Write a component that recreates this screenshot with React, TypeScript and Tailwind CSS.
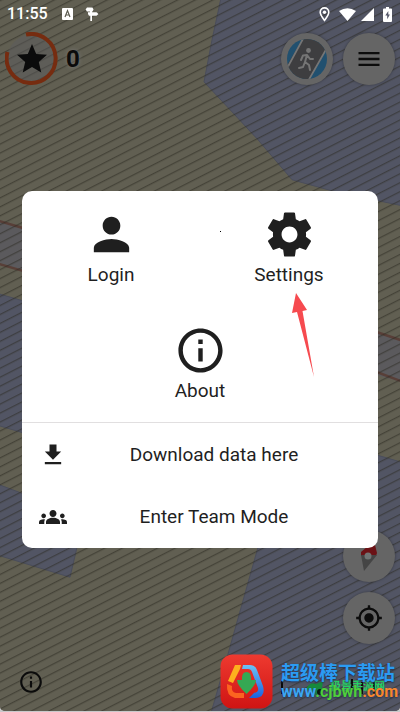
import type { ReactNode } from "react"
import { MdDownload, MdGroups, MdInfoOutline, MdMenu, MdMyLocation, MdPerson, MdStar } from "react-icons/md"

function MapBackground() {
  return (
    <svg
      className="absolute inset-0 h-full w-full"
      viewBox="0 0 400 712"
      preserveAspectRatio="none"
      aria-hidden="true"
    >
      <defs>
        <pattern id="hatch" width="20" height="8" patternUnits="userSpaceOnUse" patternTransform="rotate(-27)">
          <rect y="0" width="20" height="1.3" fill="#292820" fillOpacity="0.5" />
        </pattern>
      </defs>
      <rect width="400" height="712" fill="#615f52" />
      <g fill="#525564" stroke="#4a4d5a" strokeWidth="1">
        <path d="M221 -2 L212 40 L204 82 L232 112 L258 140 L292 180 L335 192 L402 206 V-2Z" />
        <path d="M-2 294 L22 301 L200 350 L180 480 L-2 426Z" />
        <path d="M-2 485 L22 494 L80 515 L77 548 L70 578 L-2 556Z" />
        <path d="M402 463 L378 456 L280 440 L258 548 L228 655 L211 714 H402Z" />
      </g>
      <path d="M-2 220 L402 341 V383 L-2 263Z" fill="#5b5a5d" />
      <path
        d="M-2 221 L22 228 L378 333 L402 341 M-2 264 L22 271 L378 373 L402 382"
        fill="none"
        stroke="#583f38"
        strokeWidth="2.5"
      />
      <rect width="400" height="712" fill="url(#hatch)" />
    </svg>
  )
}

function StatusBar() {
  return (
    <div className="flex h-7 items-center pl-[7px] pr-2 text-white">
      <span className="font-['Roboto',sans-serif] text-base font-medium">11:55</span>
      <svg className="ml-[14px] h-3 w-[11px]" viewBox="0 0 11 12">
        <rect width="11" height="12" rx="1" fill="#fff" />
        <path d="M3 9 L5.5 2.6 L8 9 M4 7 H7" fill="none" stroke="#5c5b4f" strokeWidth="1.2" />
      </svg>
      <svg className="ml-3 h-[15px] w-[14px]" viewBox="0 0 14 15" fill="#fff">
        <path d="M2 .5h5.5l1 2-1 2H7v.8h4.5l2 1.7-2 1.8H7V14H5.3V8.8H4L3 7V5.3h2v-.8H2L.6 2.5z" />
      </svg>
      <div className="ml-auto flex items-center gap-[5px]">
        <svg className="mr-1 h-[15px] w-[11px]" viewBox="0 0 11 15">
          <path
            d="M5.5 13.4 C3 10 1.2 7.6 1.2 5.2 a4.3 4.3 0 0 1 8.6 0 C9.8 7.6 8 10 5.5 13.4Z"
            fill="none"
            stroke="#fff"
            strokeWidth="1.6"
          />
          <circle cx="5.5" cy="5.2" r="1.7" fill="#fff" />
        </svg>
        <svg className="h-[13px] w-[17px]" viewBox="0 0 17 13">
          <path d="M0 3 Q8.5 -2.5 17 3 L8.5 13Z" fill="#fff" />
        </svg>
        <svg className="h-[13px] w-[13px]" viewBox="0 0 13 13">
          <path d="M13 0 V13 H0Z" fill="#fff" />
        </svg>
        <svg className="ml-1 h-[15px] w-[9px]" viewBox="0 0 9 15">
          <path d="M3 0h3v1.5h2q1 0 1 1V14q0 1-1 1H1q-1 0-1-1V2.5q0-1 1-1h2z" fill="#fff" />
          <path d="M5.3 4 L2.3 8.6 H4.2 V12.2 L6.9 7.6 H5.3Z" fill="#55586a" />
        </svg>
      </div>
    </div>
  )
}

interface RoundButtonProps {
  label: string
  children: ReactNode
}

function RoundButton({ label, children }: RoundButtonProps) {
  return (
    <button
      type="button"
      aria-label={label}
      className="flex h-[52px] w-[52px] items-center justify-center rounded-full bg-[#656565] text-[#0c0c0c] shadow-[0_0_3px_rgba(0,0,0,0.35)]"
    >
      {children}
    </button>
  )
}

function OverlayIcon() {
  return (
    <svg className="h-10 w-10" viewBox="0 0 40 40">
      <defs>
        <clipPath id="overlay-clip">
          <circle cx="20" cy="20" r="20" />
        </clipPath>
      </defs>
      <g clipPath="url(#overlay-clip)">
        <rect width="40" height="40" fill="#21506f" />
        <path d="M17 -2 H41 L38 12 L20 44 H-4 V33Z" fill="#3e3e40" />
        <path d="M17 -2 L-2 33 M41 7 L20 44" stroke="#757575" strokeWidth="1.8" />
      </g>
      <circle cx="21.5" cy="11.5" r="2.4" fill="#757575" />
      <path
        d="M20 16 L18 23 L22 26 L23 31 M18 23 L16 28 L12 29 M14 21 L16 16.5 L20 16 L23 20 L26 20"
        fill="none"
        stroke="#757575"
        strokeWidth="2"
        strokeLinecap="round"
        strokeLinejoin="round"
      />
    </svg>
  )
}

function CompassIcon() {
  return (
    <svg className="h-9 w-9" viewBox="0 0 36 36">
      <path d="M23 3 L10 14 L10 18 L25 18 L26 15Z" fill="#6b1216" />
      <path d="M10 17 L26 17 L13 33Z" fill="#454545" />
      <circle cx="17" cy="18" r="3.5" fill="#707474" />
    </svg>
  )
}

function GearIcon() {
  return (
    <svg className="h-[53px] w-[53px]" viewBox="0 0 24 24" fill="currentColor">
      <path d="M19.43 12.98c.04-.32.07-.64.07-.98s-.03-.66-.07-.98l2.11-1.65c.19-.15.24-.42.12-.64l-2-3.46c-.12-.22-.39-.3-.61-.22l-2.49 1c-.52-.4-1.08-.73-1.69-.98l-.38-2.65C14.46 2.18 14.25 2 14 2h-4c-.25 0-.46.18-.49.42l-.38 2.65c-.61.25-1.17.59-1.69.98l-2.49-1c-.23-.09-.49 0-.61.22l-2 3.46c-.13.22-.07.49.12.64l2.11 1.65c-.04.32-.07.65-.07.98s.03.66.07.98l-2.11 1.65c-.19.15-.24.42-.12.64l2 3.46c.12.22.39.3.61.22l2.49-1c.52.4 1.08.73 1.69.98l.38 2.65c.03.24.24.42.49.42h4c.25 0 .46-.18.49-.42l.38-2.65c.61-.25 1.17-.59 1.69-.98l2.49 1c.23.09.49 0 .61-.22l2-3.46c.12-.22.07-.49-.12-.64l-2.11-1.65zM12 15.6c-1.99 0-3.6-1.61-3.6-3.6s1.61-3.6 3.6-3.6 3.6 1.61 3.6 3.6-1.61 3.6-3.6 3.6z" />
    </svg>
  )
}

function MapHeader() {
  return (
    <header className="flex items-center justify-between px-[5px] pt-1">
      <button type="button" aria-label="Solved quests" className="flex items-center gap-2 text-[#0b0b0b]">
        <span className="relative flex h-[53px] w-[53px] items-center justify-center">
          <svg className="absolute inset-0 h-full w-full" viewBox="0 0 53 53">
            <circle cx="26.5" cy="26.5" r="24" fill="#5c5c60" fillOpacity="0.45" />
            <path d="M21 2.5 A24.5 24.5 0 1 1 2.5 20" fill="none" stroke="#762c10" strokeWidth="4" />
          </svg>
          <MdStar className="relative h-9 w-9" />
        </span>
        <span className="font-['Roboto',sans-serif] text-2xl font-bold [text-shadow:0_0_4px_#777]">0</span>
      </button>
      <div className="flex gap-[10px]">
        <RoundButton label="Overlays">
          <OverlayIcon />
        </RoundButton>
        <RoundButton label="Menu">
          <MdMenu className="h-7 w-7" />
        </RoundButton>
      </div>
    </header>
  )
}

interface MenuItemProps {
  icon: ReactNode
  label: string
}

function MenuTile({ icon, label }: MenuItemProps) {
  return (
    <button type="button" className="flex h-[116px] w-1/2 flex-col items-center pt-[17px]">
      {icon}
      <span className="mt-[2px] text-[19px] leading-6">{label}</span>
    </button>
  )
}

function MenuRow({ icon, label }: MenuItemProps) {
  return (
    <button type="button" className="flex h-[62px] w-full items-center px-[17px]">
      {icon}
      <span className="flex-1 text-center text-[19px] leading-6">{label}</span>
    </button>
  )
}

function MainMenu() {
  return (
    <section
      role="dialog"
      aria-label="Main menu"
      className="relative mx-[22px] rounded-[10px] bg-white font-['Roboto',sans-serif] text-[#1f1f1f]"
    >
      <div className="flex flex-wrap justify-center">
        <MenuTile icon={<MdPerson className="h-[53px] w-[53px]" />} label="Login" />
        <MenuTile icon={<GearIcon />} label="Settings" />
        <MenuTile icon={<MdInfoOutline className="h-[53px] w-[53px]" />} label="About" />
      </div>
      <hr className="-mt-px border-[#e1dfe0]" />
      <div className="pt-px">
        <MenuRow icon={<MdDownload className="h-7 w-7" />} label="Download data here" />
        <MenuRow icon={<MdGroups className="h-7 w-7" />} label="Enter Team Mode" />
      </div>
      <svg className="absolute right-[62px] top-[102px] h-[84px] w-6" viewBox="0 0 24 84" aria-hidden="true">
        <path d="M4 0 L15 17 L10.5 18 L22 84 L5 19 L0 20Z" fill="#f64a4f" />
      </svg>
      <span className="absolute left-[198px] top-10 h-px w-px bg-black" />
    </section>
  )
}

function SiteBadge() {
  return (
    <a href="#site" className="relative flex items-center gap-2 no-underline">
      <svg className="h-[55px] w-[53px]" viewBox="0 0 53 55" aria-hidden="true">
        <defs>
          <linearGradient id="badge-red" x2="0" y2="1">
            <stop offset="0" stopColor="#ee3a30" />
            <stop offset="1" stopColor="#cf1413" />
          </linearGradient>
          <linearGradient id="badge-blue" x2="0" y2="1">
            <stop offset="0" stopColor="#6cc2f4" />
            <stop offset="1" stopColor="#1b62e0" />
          </linearGradient>
        </defs>
        <rect x="0.5" y="0.5" width="52" height="54" rx="12" fill="url(#badge-red)" />
        <path d="M15 11 H21 L20 15 L13 29 L8 27Z" fill="#fdb01e" />
        <path d="M7 30 L12 32 Q11 38 16 39 H24 V44 H15 Q6 42 7 30Z" fill="#fb6420" />
        <path
          d="M23 11 H30 Q35 11 37 16 L43 32 Q46 43 36 44 H29 L34 39 Q39 38 38 34 L32 18 Q31 15 28 15 H22Z"
          fill="url(#badge-blue)"
        />
        <path d="M22 24 Q22 18 26.5 18 Q31 18 31 24 V26 H36 Q36 31 26.5 40 Q17 31 17 26 H22Z" fill="#35a853" />
      </svg>
      <svg className="absolute bottom-[12px] left-[60px] h-5 w-[100px]" viewBox="0 0 100 20" aria-hidden="true">
        <path d="M2 3 V17 M72 2 V14 M82 5 V17 M94 5 V17" stroke="#0a0a0a" strokeWidth="2" />
        <path d="M26 12 Q30 4 36 7 L43 4 L42 12 L36 18Z" fill="#168a3c" />
        <circle cx="40" cy="15" r="3" fill="#0a1a10" />
      </svg>
      <span className="absolute bottom-[18px] right-[13px] font-['Noto_Sans_CJK_SC',sans-serif] text-[11px] font-bold leading-3 text-[#25d366]">
        极景手游网
      </span>
      <span className="relative flex flex-col font-bold [text-shadow:0_1px_2px_#223350]">
        <span className="font-['Noto_Sans_CJK_SC',sans-serif] text-[19px] leading-5 text-[#2b9bf2]">超级棒下载站</span>
        <span className="font-['Roboto',sans-serif] text-base leading-5 text-[#3ba6f3]">
          www<span className="text-[#4fcf3a]">.cjbwh</span>
          <span className="text-[#f8872c]">.com</span>
        </span>
      </span>
    </a>
  )
}

export default function App() {
  return (
    <div className="bg-[#c9c9cb] pb-px">
      <main className="relative flex min-h-[calc(100vh-1px)] flex-col overflow-hidden rounded-b-[5px] bg-[#615f52]">
        <MapBackground />
        <div className="relative">
          <StatusBar />
          <MapHeader />
        </div>
        <div className="relative z-10 mt-[106px]">
          <MainMenu />
        </div>
        <div className="relative -mt-[18px] flex flex-col items-end gap-[10px] pr-[5px]">
          <RoundButton label="Compass">
            <CompassIcon />
          </RoundButton>
          <RoundButton label="My location">
            <MdMyLocation className="h-7 w-7" />
          </RoundButton>
        </div>
        <footer className="relative mt-auto flex items-center justify-between pb-[2px] pl-[18px] pr-[2px]">
          <button type="button" aria-label="Attribution">
            <MdInfoOutline className="h-[26px] w-[26px] text-[#0b0b0b]" />
          </button>
          <SiteBadge />
        </footer>
      </main>
    </div>
  )
}
